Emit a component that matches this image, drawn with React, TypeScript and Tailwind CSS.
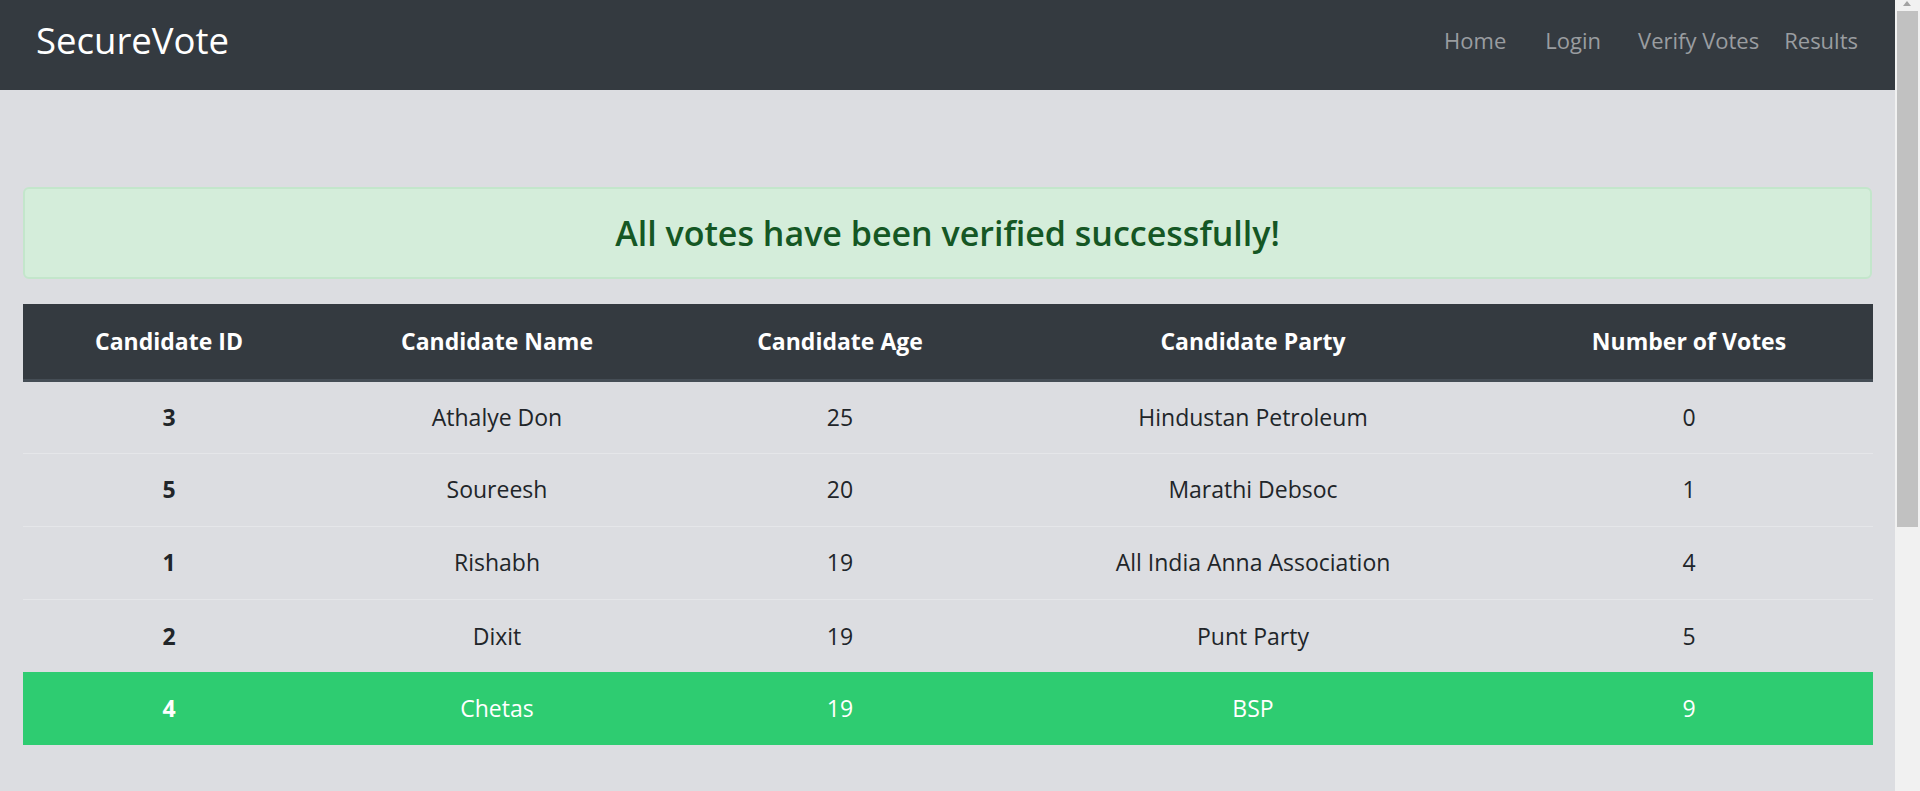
import React from 'react';

const candidates = [
  { id: 3, name: 'Athalye Don', age: 25, party: 'Hindustan Petroleum', votes: 0 },
  { id: 5, name: 'Soureesh', age: 20, party: 'Marathi Debsoc', votes: 1 },
  { id: 1, name: 'Rishabh', age: 19, party: 'All India Anna Association', votes: 4 },
  { id: 2, name: 'Dixit', age: 19, party: 'Punt Party', votes: 5 },
  { id: 4, name: 'Chetas', age: 19, party: 'BSP', votes: 9 },
];

function Navbar() {
  return (
    <nav className="h-[90px] bg-[#343a40] flex items-center justify-between pl-[36px] pr-[37px] pb-[9px]">
      <a href="#" className="text-white text-[36.5px] leading-none">
        SecureVote
      </a>
      <div className="flex items-center text-[22px] text-[#9a9da0]">
        <a href="#" className="mr-[39px]">Home</a>
        <a href="#" className="mr-[37px]">Login</a>
        <a href="#" className="mr-[25px]">Verify Votes</a>
        <a href="#">Results</a>
      </div>
    </nav>
  );
}

function ResultsTable() {
  const maxVotes = Math.max(...candidates.map((c) => c.votes));
  return (
    <table className="w-full border-collapse table-fixed text-[23px] text-center">
      <colgroup>
        <col className="w-[292px]" />
        <col className="w-[364px]" />
        <col className="w-[322px]" />
        <col className="w-[504px]" />
        <col className="w-[368px]" />
      </colgroup>
      <thead className="bg-[#343a40] text-white">
        <tr className="h-[76px]">
          <th className="font-bold border-b-[3px] border-[#454d55]">Candidate ID</th>
          <th className="font-bold border-b-[3px] border-[#454d55]">Candidate Name</th>
          <th className="font-bold border-b-[3px] border-[#454d55]">Candidate Age</th>
          <th className="font-bold border-b-[3px] border-[#454d55]">Candidate Party</th>
          <th className="font-bold border-b-[3px] border-[#454d55]">Number of Votes</th>
        </tr>
      </thead>
      <tbody>
        {candidates.map((c, i) => {
          const winner = c.votes === maxVotes;
          return (
            <tr
              key={c.id}
              className={
                winner
                  ? 'h-[73px] bg-[#2ecc71] text-white'
                  : i === 0
                    ? 'h-[73px] text-[#212529]'
                    : 'h-[73px] text-[#212529] border-t border-[#e5e6e9]'
              }
            >
              <td className="font-bold">{c.id}</td>
              <td>{c.name}</td>
              <td>{c.age}</td>
              <td>{c.party}</td>
              <td>{c.votes}</td>
            </tr>
          );
        })}
      </tbody>
    </table>
  );
}

export default function App() {
  return (
    <div className="flex h-[791px] overflow-hidden bg-[#dcdde1] font-['Open_Sans',sans-serif]">
      <div className="flex-1 min-w-0">
        <Navbar />
        <main className="px-[23px] pt-[97px]">
          {/* Verification banner */}
          <div className="h-[92px] mb-[25px] flex items-center justify-center rounded-[6px] border-[2px] border-[#c3e6cb] bg-[#d4edda]">
            <h3 className="text-[34px] font-semibold text-[#155724]">All votes have been verified successfully!</h3>
          </div>

          <ResultsTable />
        </main>
      </div>

      {/* Fake scrollbar */}
      <div className="w-[25px] bg-[#f1f1f1] relative">
        <div className="absolute left-[8px] top-[1px] w-0 h-0 border-l-[4px] border-r-[4px] border-b-[5px] border-l-transparent border-r-transparent border-b-[#a3a3a3]" />
        <div className="absolute left-[2px] right-[2px] top-[11px] h-[516px] bg-[#c1c1c1]" />
      </div>
    </div>
  );
}
